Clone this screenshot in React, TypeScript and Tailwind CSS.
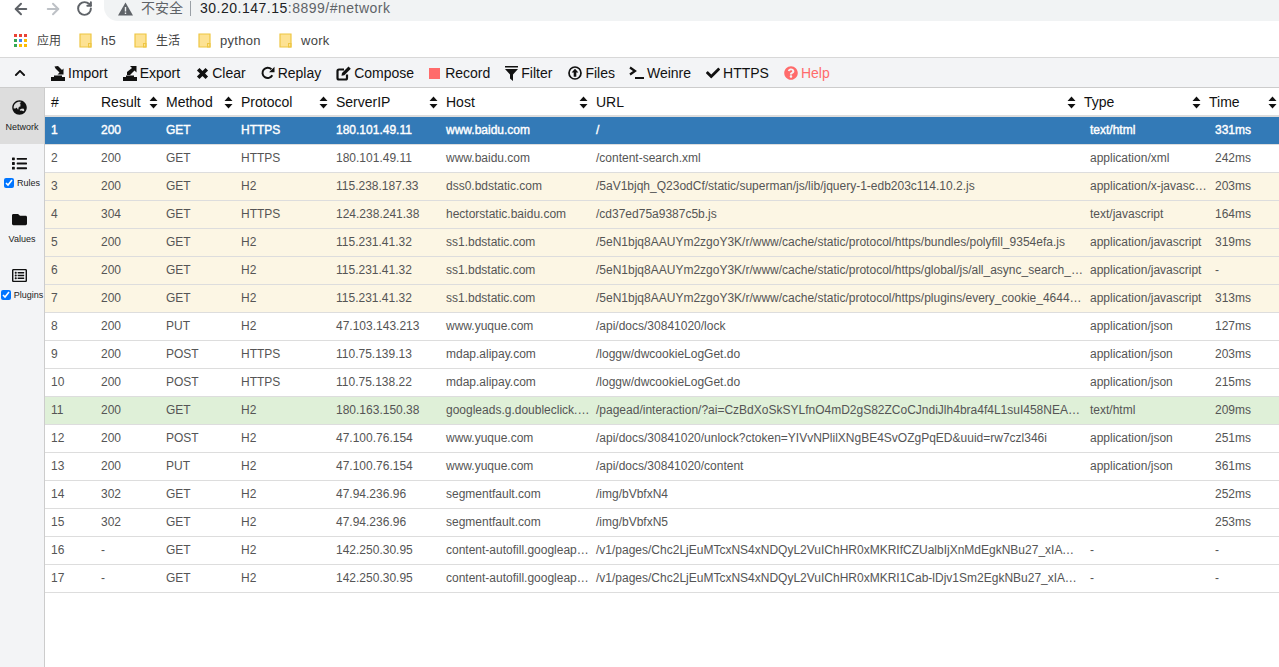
import React from 'react';
import { ArrowLeft, ArrowRight, RotateCw } from 'lucide-react';
import { FaChevronUp, FaCheck, FaQuestionCircle, FaGlobeAsia, FaList, FaFolder, FaRegListAlt } from 'react-icons/fa';

const headCols = [
  { label: '#', className: 'w-[50px]', sort: false },
  { label: 'Result', className: 'w-[65px]', sort: true },
  { label: 'Method', className: 'w-[75px]', sort: true },
  { label: 'Protocol', className: 'w-[95px]', sort: true },
  { label: 'ServerIP', className: 'w-[110px]', sort: true },
  { label: 'Host', className: 'w-[150px]', sort: true },
  { label: 'URL', className: 'w-[488px]', sort: true },
  { label: 'Type', className: 'w-[125px]', sort: true },
  { label: 'Time', className: 'w-[76px]', sort: true },
];

type Row = {
  result: string;
  method: string;
  protocol: string;
  ip: string;
  host: string;
  url: string;
  type: string;
  time: string;
  tone?: 'selected' | 'js' | 'green';
};

const rows: Row[] = [
  { result: '200', method: 'GET', protocol: 'HTTPS', ip: '180.101.49.11', host: 'www.baidu.com', url: '/', type: 'text/html', time: '331ms', tone: 'selected' },
  { result: '200', method: 'GET', protocol: 'HTTPS', ip: '180.101.49.11', host: 'www.baidu.com', url: '/content-search.xml', type: 'application/xml', time: '242ms' },
  { result: '200', method: 'GET', protocol: 'H2', ip: '115.238.187.33', host: 'dss0.bdstatic.com', url: '/5aV1bjqh_Q23odCf/static/superman/js/lib/jquery-1-edb203c114.10.2.js', type: 'application/x-javascript', time: '203ms', tone: 'js' },
  { result: '304', method: 'GET', protocol: 'HTTPS', ip: '124.238.241.38', host: 'hectorstatic.baidu.com', url: '/cd37ed75a9387c5b.js', type: 'text/javascript', time: '164ms', tone: 'js' },
  { result: '200', method: 'GET', protocol: 'H2', ip: '115.231.41.32', host: 'ss1.bdstatic.com', url: '/5eN1bjq8AAUYm2zgoY3K/r/www/cache/static/protocol/https/bundles/polyfill_9354efa.js', type: 'application/javascript', time: '319ms', tone: 'js' },
  { result: '200', method: 'GET', protocol: 'H2', ip: '115.231.41.32', host: 'ss1.bdstatic.com', url: '/5eN1bjq8AAUYm2zgoY3K/r/www/cache/static/protocol/https/global/js/all_async_search_8d2f1a.js', type: 'application/javascript', time: '-', tone: 'js' },
  { result: '200', method: 'GET', protocol: 'H2', ip: '115.231.41.32', host: 'ss1.bdstatic.com', url: '/5eN1bjq8AAUYm2zgoY3K/r/www/cache/static/protocol/https/plugins/every_cookie_4644b13.js', type: 'application/javascript', time: '313ms', tone: 'js' },
  { result: '200', method: 'PUT', protocol: 'H2', ip: '47.103.143.213', host: 'www.yuque.com', url: '/api/docs/30841020/lock', type: 'application/json', time: '127ms' },
  { result: '200', method: 'POST', protocol: 'HTTPS', ip: '110.75.139.13', host: 'mdap.alipay.com', url: '/loggw/dwcookieLogGet.do', type: 'application/json', time: '203ms' },
  { result: '200', method: 'POST', protocol: 'HTTPS', ip: '110.75.138.22', host: 'mdap.alipay.com', url: '/loggw/dwcookieLogGet.do', type: 'application/json', time: '215ms' },
  { result: '200', method: 'GET', protocol: 'H2', ip: '180.163.150.38', host: 'googleads.g.doubleclick.net', url: '/pagead/interaction/?ai=CzBdXoSkSYLfnO4mD2gS82ZCoCJndiJlh4bra4f4L1suI458NEAEgABCDAQ', type: 'text/html', time: '209ms', tone: 'green' },
  { result: '200', method: 'POST', protocol: 'H2', ip: '47.100.76.154', host: 'www.yuque.com', url: '/api/docs/30841020/unlock?ctoken=YIVvNPlilXNgBE4SvOZgPqED&uuid=rw7czl346i', type: 'application/json', time: '251ms' },
  { result: '200', method: 'PUT', protocol: 'H2', ip: '47.100.76.154', host: 'www.yuque.com', url: '/api/docs/30841020/content', type: 'application/json', time: '361ms' },
  { result: '302', method: 'GET', protocol: 'H2', ip: '47.94.236.96', host: 'segmentfault.com', url: '/img/bVbfxN4', type: '', time: '252ms' },
  { result: '302', method: 'GET', protocol: 'H2', ip: '47.94.236.96', host: 'segmentfault.com', url: '/img/bVbfxN5', type: '', time: '253ms' },
  { result: '-', method: 'GET', protocol: 'H2', ip: '142.250.30.95', host: 'content-autofill.googleapis.com', url: '/v1/pages/Chc2LjEuMTcxNS4xNDQyL2VuIChHR0xMKRIfCZUalbIjXnMdEgkNBu27_xIAWWWWWWWWWWWW', type: '-', time: '-' },
  { result: '-', method: 'GET', protocol: 'H2', ip: '142.250.30.95', host: 'content-autofill.googleapis.com', url: '/v1/pages/Chc2LjEuMTcxNS4xNDQyL2VuIChHR0xMKRI1Cab-lDjv1Sm2EgkNBu27_xIAWWWWWWWWWWWW', type: '-', time: '-' },
];

const SortIcon = () => (
  <svg width="9" height="13" viewBox="0 0 9 13" className="shrink-0">
    <path d="M4.5 0.5 L8.5 5 H0.5 Z M0.5 8 H8.5 L4.5 12.5 Z" fill="#111" />
  </svg>
);

const ImportIcon = () => (
  <svg width="14" height="15" viewBox="0 0 14 15">
    <path d="M0 11 H3 V9.5 H11 V11 H14 V15 H0 Z" fill="#111" />
    <path d="M3.5 0.5 L7 0 L11 4 L12.5 2.5 V8.5 H6.5 L8.5 6.5 L4.5 2.5 Z" fill="#111" />
  </svg>
);

const ExportIcon = () => (
  <svg width="14" height="15" viewBox="0 0 14 15">
    <path d="M0 11 H3 V9.5 H11 V11 H14 V15 H0 Z" fill="#111" />
    <path d="M7 0 H13.5 V6.5 L11.5 4.5 L7 9 H4 V6 L9 2 Z" fill="#111" />
  </svg>
);

const ClearIcon = () => (
  <svg width="13" height="13" viewBox="0 0 13 13">
    <path d="M2.2 2.2 L10.8 10.8 M10.8 2.2 L2.2 10.8" stroke="#111" strokeWidth="3.6" />
  </svg>
);

const ReplayIcon = () => (
  <svg width="14" height="14" viewBox="0 0 14 14">
    <path d="M11.3 9.3 A5.2 5.2 0 1 1 10.4 3.2" fill="none" stroke="#111" strokeWidth="2" />
    <path d="M13.5 0.8 V6.3 H8 Z" fill="#111" />
  </svg>
);

const ComposeIcon = () => (
  <svg width="15" height="15" viewBox="0 0 15 15">
    <path d="M11 8.5 V12 A1.5 1.5 0 0 1 9.5 13.5 H3 A1.5 1.5 0 0 1 1.5 12 V5 A1.5 1.5 0 0 1 3 3.5 H8" fill="none" stroke="#111" strokeWidth="2.2" />
    <path d="M12.5 0.5 L14.8 2.8 L8.3 9.3 L5.5 9.8 L6 7 Z" fill="#111" />
  </svg>
);

const FilterIcon = () => (
  <svg width="13" height="15" viewBox="0 0 13 15">
    <path d="M0 0 H13 V1.5 H0 Z M0 3 H13 L8 8.5 V15 L5 12.5 V8.5 Z" fill="#111" />
  </svg>
);

const UploadCircleIcon = () => (
  <svg width="14" height="14" viewBox="0 0 14 14">
    <circle cx="7" cy="7" r="6" fill="none" stroke="#111" strokeWidth="1.7" />
    <path d="M7 2.8 L10.4 6.6 H8.3 V10.8 H5.7 V6.6 H3.6 Z" fill="#111" />
  </svg>
);

const WeinreIcon = () => (
  <svg width="15" height="14" viewBox="0 0 15 14">
    <path d="M1 1.5 L6 5 L1 8.5" fill="none" stroke="#111" strokeWidth="2.2" />
    <path d="M6 11 H15 V13 H6 Z" fill="#111" />
  </svg>
);

const Tool = ({ icon, label, className = 'text-[#111]' }: { icon: React.ReactNode; label: string; className?: string }) => (
  <div className={`flex items-center gap-[3px] ${className}`}>
    <span className="flex items-center justify-center">{icon}</span>
    <span>{label}</span>
  </div>
);

const Folder = () => (
  <svg width="13" height="15" viewBox="0 0 13 15" className="shrink-0">
    <path d="M1 1 H12 V14 H1 Z" fill="#fde293" stroke="#eec643" strokeWidth="1.2" />
    <rect x="9.5" y="10.5" width="2.5" height="3.5" fill="none" stroke="#eec643" />
  </svg>
);

const AppsIcon = () => {
  const colors = ['#ea4335', '#ea4335', '#ea4335', '#34a853', '#4285f4', '#fbbc04', '#34a853', '#fbbc04', '#fbbc04'];
  return (
    <div className="grid grid-cols-3 gap-[2px] w-[13px] shrink-0">
      {colors.map((color, i) => (
        <span key={i} className="w-[3px] h-[3px]" style={{ backgroundColor: color }} />
      ))}
    </div>
  );
};

const SideItem = ({ icon, label, active, checkbox }: { icon: React.ReactNode; label: string; active?: boolean; checkbox?: boolean }) => (
  <div className={`h-14 flex flex-col items-center pt-[10px] ${active ? 'bg-[#ddd]' : ''}`}>
    <div className="h-[18px] flex items-center justify-center pr-[6px] text-[#111]">{icon}</div>
    <div className="mt-[5px] flex items-center gap-[3px] text-[9px] leading-[12px] text-[#222] whitespace-nowrap">
      {checkbox && <input type="checkbox" defaultChecked className="w-[10px] h-[10px] m-0 accent-[#0075ff]" />}
      <span>{label}</span>
    </div>
  </div>
);

export default function App() {
  return (
    <div className="h-[667px] w-[1279px] overflow-hidden bg-white flex flex-col font-['Liberation_Sans','Noto_Sans_CJK_SC',sans-serif]">
      {/* Browser chrome */}
      <div className="h-[58px] shrink-0 border-b border-[#d8d8d8] flex flex-col">
        <div className="h-[21px] flex items-start">
          <div className="flex items-center pl-[12px] gap-[14px] h-[17px] text-[#5f6368]">
            <ArrowLeft size={18} strokeWidth={2.6} />
            <ArrowRight size={18} strokeWidth={2.6} className="text-[#bdc1c6]" />
            <RotateCw size={17} strokeWidth={2.8} />
          </div>
          <div className="ml-[11px] flex-1 h-[21px] bg-[#f1f3f4] rounded-bl-[14px] flex items-start pl-[14px]">
            <div className="flex items-center h-[17px] text-[14px]">
              <svg width="15" height="14" viewBox="0 0 15 14">
                <path d="M7.5 0.5 L15 13.5 H0 Z" fill="#5f6368" />
                <path d="M6.8 5 H8.2 V9.5 H6.8 Z M6.8 10.5 H8.2 V12 H6.8 Z" fill="#f1f3f4" />
              </svg>
              <span className="ml-[8px] text-[#5f6368]">不安全</span>
              <span className="ml-[7px] w-px h-[15px] bg-[#9aa0a6]" />
              <span className="ml-[9px] text-[#202124] tracking-[0.5px]">30.20.147.15<span className="text-[#5f6368]">:8899/#network</span></span>
            </div>
          </div>
        </div>
        <div className="flex-1 flex items-center text-[12px] text-[#444] pl-[14px] pt-[3px]">
          <AppsIcon />
          <span className="ml-[10px] w-[42px]">应用</span>
          <Folder />
          <span className="ml-[9px] w-[33px] text-[13px] tracking-[0.3px]">h5</span>
          <Folder />
          <span className="ml-[9px] w-[42px]">生活</span>
          <Folder />
          <span className="ml-[9px] w-[59px] text-[13px] tracking-[0.3px]">python</span>
          <Folder />
          <span className="ml-[9px] text-[13px] tracking-[0.3px]">work</span>
        </div>
      </div>

      {/* Toolbar */}
      <div className="h-[30px] shrink-0 bg-[#f3f4f6] border-b border-[#ccc] flex items-center text-[14px] pt-[1px]">
        <div className="w-[51px] shrink-0 pl-[14px] text-[#111]">
          <FaChevronUp size={12} />
        </div>
        <div className="flex items-center gap-[15px]">
          <Tool icon={<ImportIcon />} label="Import" />
          <Tool icon={<ExportIcon />} label="Export" />
          <Tool icon={<ClearIcon />} label="Clear" className="text-[#111] ml-px" />
          <Tool icon={<ReplayIcon />} label="Replay" />
          <Tool icon={<ComposeIcon />} label="Compose" />
          <Tool icon={<span className="block w-[11px] h-[11px] bg-[#ff6b6b] mr-[2px]" />} label="Record" />
          <Tool icon={<FilterIcon />} label="Filter" />
          <Tool icon={<UploadCircleIcon />} label="Files" className="text-[#111] ml-px" />
          <Tool icon={<WeinreIcon />} label="Weinre" className="text-[#111] -ml-px" />
          <Tool icon={<FaCheck size={14} />} label="HTTPS" />
          <Tool icon={<FaQuestionCircle size={14} />} label="Help" className="text-[#ff6b6b]" />
        </div>
      </div>

      <div className="flex-1 flex min-h-0">
        {/* Sidebar */}
        <div className="w-[45px] shrink-0 bg-[#f3f4f6] border-r border-[#ccc]">
          <SideItem icon={<FaGlobeAsia size={15} />} label="Network" active />
          <SideItem icon={<FaList size={15} />} label="Rules" checkbox />
          <SideItem icon={<FaFolder size={15} />} label="Values" />
          <SideItem icon={<FaRegListAlt size={15} />} label="Plugins" checkbox />
        </div>

        {/* Session table */}
        <div className="flex-1 min-w-0">
          <div className="h-[29px] flex text-[14px] text-[#111] border-b-2 border-[#ddd] pt-px">
            {headCols.map((col) => (
              <div key={col.label} className={`${col.className} shrink-0 flex items-center justify-between pl-[6px] pr-[2px]`}>
                <span>{col.label}</span>
                {col.sort && <SortIcon />}
              </div>
            ))}
          </div>
          {rows.map((row, i) => {
            const tone =
              row.tone === 'selected'
                ? 'bg-[#337ab7] text-white [-webkit-text-stroke:0.4px_white]'
                : row.tone === 'js'
                  ? 'bg-[#fcf6e4] text-[#555]'
                  : row.tone === 'green'
                    ? 'bg-[#dff0d8] text-[#555]'
                    : 'bg-white text-[#555]';
            return (
              <div key={i} className={`h-7 flex items-center pb-[2px] text-[12px] border-b border-[#ddd] ${tone}`}>
                <div className="w-[50px] shrink-0 pl-[6px]">{i + 1}</div>
                <div className="w-[65px] shrink-0 pl-[6px]">{row.result}</div>
                <div className="w-[75px] shrink-0 pl-[6px]">{row.method}</div>
                <div className="w-[95px] shrink-0 pl-[6px]">{row.protocol}</div>
                <div className="w-[110px] shrink-0 pl-[6px]">{row.ip}</div>
                <div className="w-[150px] shrink-0 pl-[6px] truncate">{row.host}</div>
                <div className="w-[494px] shrink-0 pl-[6px] pr-px truncate">{row.url}</div>
                <div className="w-[125px] shrink-0 pl-[6px] truncate">{row.type}</div>
                <div className="w-[70px] shrink-0 pl-[6px]">{row.time}</div>
              </div>
            );
          })}
        </div>
      </div>
    </div>
  );
}
